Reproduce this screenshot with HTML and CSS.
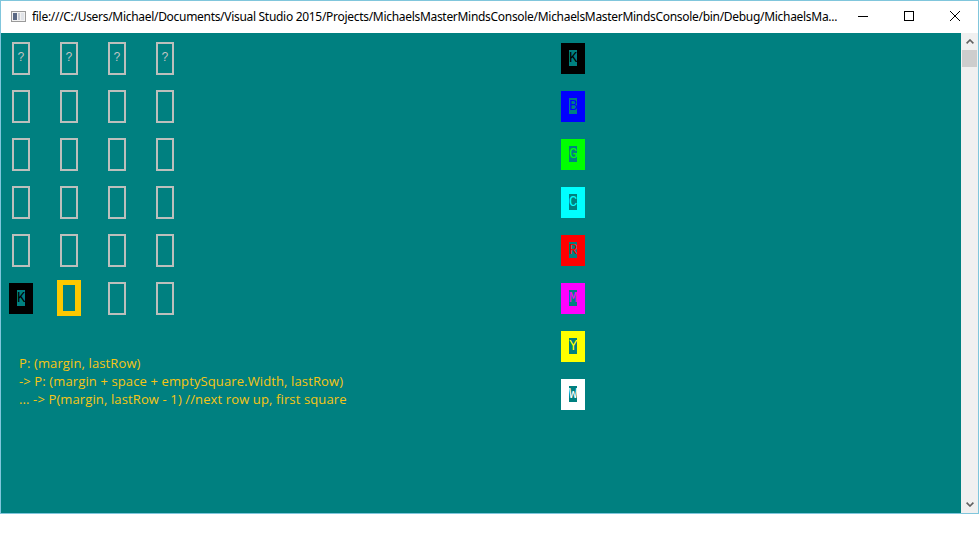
FILE: index.html
```html
<!DOCTYPE html>
<html lang="en">
<head>
<meta charset="utf-8">
<title>MichaelsMasterMindsConsole</title>
<link rel="stylesheet" href="styles.css">
</head>
<body>
<div class="window">
  <div class="titlebar">
    <svg class="app-icon" width="15" height="11" viewBox="0 0 15 11">
      <rect x="0.5" y="0.5" width="14" height="10" fill="#f2f2f2" stroke="#9a9a9a"/>
      <rect x="2" y="2" width="4" height="7" fill="#5a6884"/>
      <rect x="7" y="2" width="2" height="7" fill="#c6cad2"/>
      <rect x="10" y="2" width="3" height="7" fill="#e0e3e8"/>
    </svg>
    <span class="title">file:///C:/Users/Michael/Documents/Visual Studio 2015/Projects/MichaelsMasterMindsConsole/MichaelsMasterMindsConsole/bin/Debug/MichaelsMa...</span>
    <div class="caption-buttons">
      <div class="cap-btn">
        <svg width="10" height="10" viewBox="0 0 10 10"><line x1="0" y1="5.5" x2="10" y2="5.5" stroke="#000" stroke-width="1"/></svg>
      </div>
      <div class="cap-btn">
        <svg width="10" height="10" viewBox="0 0 10 10"><rect x="0.5" y="0.5" width="9" height="9" fill="none" stroke="#000" stroke-width="1"/></svg>
      </div>
      <div class="cap-btn">
        <svg width="10" height="10" viewBox="0 0 10 10"><path d="M0 0 L10 10 M10 0 L0 10" stroke="#000" stroke-width="1" fill="none"/></svg>
      </div>
    </div>
  </div>
  <div class="client">
    <div class="canvas">
      <div class="left">
        <div class="board">
          <div class="hole"><span class="q">?</span></div>
          <div class="hole"><span class="q">?</span></div>
          <div class="hole"><span class="q">?</span></div>
          <div class="hole"><span class="q">?</span></div>

          <div class="hole"></div><div class="hole"></div><div class="hole"></div><div class="hole"></div>
          <div class="hole"></div><div class="hole"></div><div class="hole"></div><div class="hole"></div>
          <div class="hole"></div><div class="hole"></div><div class="hole"></div><div class="hole"></div>
          <div class="hole"></div><div class="hole"></div><div class="hole"></div><div class="hole"></div>

          <div class="peg peg-k"><span class="ch">K</span></div>
          <div class="current"></div>
          <div class="hole"></div>
          <div class="hole"></div>
        </div>
        <div class="notes">
          <div>P: (margin, lastRow)</div>
          <div>-&gt; P: (margin + space + emptySquare.Width, lastRow)</div>
          <div>... -&gt; P(margin, lastRow - 1) //next row up, first square</div>
        </div>
      </div>
      <div class="palette">
        <div class="slot"><div class="peg peg-k"><span class="ch">K</span></div></div>
        <div class="slot"><div class="peg peg-b"><span class="ch">B</span></div></div>
        <div class="slot"><div class="peg peg-g"><span class="ch">G</span></div></div>
        <div class="slot"><div class="peg peg-c"><span class="ch">C</span></div></div>
        <div class="slot"><div class="peg peg-r"><span class="ch">R</span></div></div>
        <div class="slot"><div class="peg peg-m"><span class="ch">M</span></div></div>
        <div class="slot"><div class="peg peg-y"><span class="ch">Y</span></div></div>
        <div class="slot"><div class="peg peg-w"><span class="ch">W</span></div></div>
      </div>
    </div>
    <div class="scrollbar">
      <div class="sb-btn">
        <svg width="8" height="5" viewBox="0 0 8 5"><path d="M0.6 4.4 L4 1 L7.4 4.4" fill="none" stroke="#606060" stroke-width="1.6"/></svg>
      </div>
      <div class="sb-thumb"></div>
      <div class="sb-track"></div>
      <div class="sb-btn">
        <svg width="8" height="5" viewBox="0 0 8 5"><path d="M0.6 0.6 L4 4 L7.4 0.6" fill="none" stroke="#606060" stroke-width="1.6"/></svg>
      </div>
    </div>
  </div>
</div>
</body>
</html>
```

FILE: styles.css
```css
* { box-sizing: border-box; }

html, body {
  margin: 0;
  padding: 0;
  background: #ffffff;
}

.window {
  width: 979px;
  height: 514px;
  border: 1px solid #80c6dc;
  display: flex;
  flex-direction: column;
  background: #ffffff;
}

.titlebar {
  height: 32px;
  flex: 0 0 32px;
  display: flex;
  align-items: flex-start;
  background: #ffffff;
}

.app-icon {
  display: block;
  margin: 10px 6px 0 10px;
  flex: 0 0 auto;
}

.title {
  margin-top: 8px;
  font-family: "Noto Sans", "Open Sans", sans-serif;
  font-size: 12px;
  letter-spacing: -0.3px;
  line-height: 16px;
  color: #000000;
  white-space: nowrap;
  overflow: hidden;
  flex: 0 1 auto;
}

.caption-buttons {
  margin-left: auto;
  display: flex;
  flex: 0 0 138px;
  width: 138px;
}

.cap-btn {
  width: 46px;
  height: 30px;
  display: flex;
  align-items: center;
  justify-content: center;
}

.cap-btn svg { display: block; }

.client {
  flex: 1 1 auto;
  display: flex;
  min-height: 0;
}

.canvas {
  flex: 1 1 auto;
  background: #008080;
  display: flex;
  padding: 7px 0 0 8px;
}

.left {
  width: 552px;
  flex: 0 0 552px;
}

.board {
  display: grid;
  grid-template-columns: repeat(4, 24px);
  grid-auto-rows: 36px;
  column-gap: 24px;
  row-gap: 12px;
  place-items: center;
}

.hole {
  width: 18px;
  height: 33px;
  border: 2px solid #bcbfbc;
  display: flex;
  align-items: center;
  justify-content: center;
}

.q {
  font-family: "Liberation Mono", "DejaVu Sans Mono", monospace;
  font-size: 12px;
  line-height: 12px;
  color: #c4c4c4;
}

.current {
  width: 24px;
  height: 36px;
  border-style: solid;
  border-color: #fdc800;
  border-width: 5px 6px;
}

.peg {
  width: 24px;
  height: 31px;
  display: flex;
  align-items: center;
  justify-content: center;
}

.ch {
  display: block;
  width: 8px;
  height: 16px;
  background: #008080;
  font-family: "Liberation Mono", "DejaVu Sans Mono", monospace;
  font-size: 14px;
  line-height: 16px;
  text-align: center;
  overflow: visible;
  white-space: nowrap;
}

.peg-k { background: #000000; }
.peg-k .ch { color: #000000; }
.peg-b { background: #0000ff; }
.peg-b .ch { color: #0000ff; }
.peg-g { background: #00ff00; }
.peg-g .ch { color: #00ff00; }
.peg-c { background: #00ffff; }
.peg-c .ch { color: #00ffff; }
.peg-r { background: #ff0000; }
.peg-r .ch { color: #ff0000; }
.peg-m { background: #ff00ff; }
.peg-m .ch { color: #ff00ff; }
.peg-y { background: #ffff00; }
.peg-y .ch { color: #ffff00; }
.peg-w { background: #ffffff; }
.peg-w .ch { color: #ffffff; }

.notes {
  margin-top: 38px;
  padding-left: 10px;
  font-family: "Open Sans", "Noto Sans", sans-serif;
  font-size: 13px;
  letter-spacing: 0.12px;
  line-height: 18px;
  color: #f6c514;
  white-space: nowrap;
}

.palette {
  display: flex;
  flex-direction: column;
  gap: 12px;
}

.slot {
  width: 24px;
  height: 36px;
  display: flex;
  align-items: center;
  justify-content: center;
}

.scrollbar {
  width: 17px;
  flex: 0 0 17px;
  background: #f0f0f0;
  display: flex;
  flex-direction: column;
}

.sb-btn {
  height: 17px;
  flex: 0 0 17px;
  display: flex;
  align-items: center;
  justify-content: center;
}

.sb-btn svg { display: block; }

.sb-thumb {
  height: 17px;
  flex: 0 0 17px;
  margin: 0 1px;
  background: #cdcdcd;
}

.sb-track { flex: 1 1 auto; }
```
